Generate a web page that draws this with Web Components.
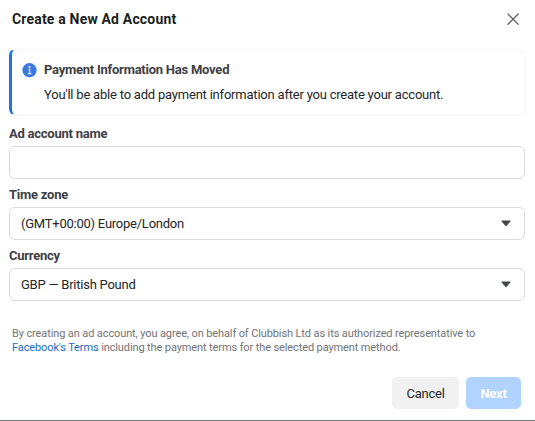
<!DOCTYPE html>
<html lang="en">
<head>
<meta charset="utf-8">
<title>Create a New Ad Account</title>
<style>
html,body{margin:0;background:#fff}
body{font-family:Roboto,"Liberation Sans",sans-serif;color:#1c1e21}
</style>
</head>
<body>
<ad-dialog>
  <span slot="title">Create a New Ad Account</span>
  <info-banner>
    <span slot="heading">Payment Information Has Moved</span>You'll be able to add payment information after you create your account.
  </info-banner>
  <form-field label="Ad account name"></form-field>
  <form-field label="Time zone" select>(GMT+00:00) Europe/London</form-field>
  <form-field label="Currency" select>GBP — British Pound</form-field>
  <terms-note></terms-note>
  <dialog-button slot="actions">Cancel</dialog-button>
  <dialog-button slot="actions" primary>Next</dialog-button>
</ad-dialog>
<script>
const define = (name, html) => customElements.define(name, class extends HTMLElement {
  constructor() {
    super();
    const t = document.createElement('template');
    t.innerHTML = html;
    this.attachShadow({mode: 'open'}).append(t.content.cloneNode(true));
    const label = this.shadowRoot.querySelector('.label');
    if (label) label.textContent = this.getAttribute('label');
  }
});

define('ad-dialog', `
<style>
:host{display:flex;flex-direction:column;box-sizing:border-box;height:421px;border-bottom:1px solid #77787b;background:#fff}
header{display:flex;align-items:center;justify-content:space-between;height:38px;padding:0 15px 0 12px;margin-bottom:11px}
h1{margin:0;font-size:14px;line-height:18px;font-weight:700;letter-spacing:.18px;color:#1c1e21}
svg{display:block}
main{display:flex;flex-direction:column;padding:0 10px 0 9px}
footer{display:flex;justify-content:flex-end;gap:7px;padding:0 14px;margin-top:22px}
</style>
<header><h1><slot name="title"></slot></h1>
<svg width="14" height="14" viewBox="0 0 14 14" fill="none" stroke="#66676a" stroke-width="1.3" stroke-linecap="round"><path d="M2 2l10.2 10.2M12.2 2L2 12.2"/></svg></header>
<main><slot></slot></main>
<footer><slot name="actions"></slot></footer>`);

define('info-banner', `
<style>
:host{display:flex;box-sizing:border-box;height:66px;border:1px solid #f6f6f6;border-left:3px solid #2374e1;border-radius:6px;padding:11px 10px 0 10px;gap:7px;margin-bottom:9px;box-shadow:0 0 2px #eeeeef}
svg{display:block;flex:none;margin-top:2px;margin-left:-.5px;margin-right:.5px}
h2{margin:0 0 7px;font-size:13px;line-height:18px;font-weight:700;letter-spacing:-.24px;color:#3e4043}
p{margin:0;font-size:13px;line-height:18px;letter-spacing:-.21px;color:#242628;white-space:nowrap}
</style>
<svg width="15" height="15" viewBox="0 0 15 15"><circle cx="7.5" cy="7.2" r="7.1" fill="#3b78e2"/><circle cx="7.5" cy="4.1" r="1.15" fill="#e4eeff"/><path d="M6 6.5h1.7v4M5.8 10.6h3.7" fill="none" stroke="#dce8ff" stroke-width="1.2"/></svg>
<div><h2><slot name="heading"></slot></h2><p><slot></slot></p></div>`);

define('form-field', `
<style>
:host{display:block;height:61px}
.label{box-sizing:border-box;padding-top:1px;font-size:13px;line-height:18px;height:22px;font-weight:700;letter-spacing:-.24px;color:#3e4043}
.box{display:flex;align-items:center;justify-content:space-between;box-sizing:border-box;height:33px;border:1px solid #d9dadb;border-radius:6px;padding:0 13px 0 11px;font-size:13px;line-height:18px;letter-spacing:-.24px;color:#242628}
svg{display:none}
:host([select]) svg{display:block}
</style>
<div class="label"></div>
<div class="box"><span><slot></slot></span>
<svg width="10" height="7" viewBox="0 0 10 7"><path d="M1 .5h8q.9.1.3.9L5.7 5.7q-.7.7-1.4 0L.7 1.4Q.1.6 1 .5z" fill="#444648"/></svg></div>`);

define('terms-note', `
<style>
:host{display:block;margin-top:20px;padding-left:3px;font-size:11px;line-height:14px;letter-spacing:-.115px;color:#737476;white-space:nowrap}
a{color:#1b6bc4;text-decoration:none}
</style>By creating an ad account, you agree, on behalf of Clubbish Ltd as its authorized representative to<br><a href="#">Facebook's Terms</a> including the payment terms for the selected payment method.`);

define('dialog-button', `
<style>
:host{display:flex;align-items:center;justify-content:center;box-sizing:border-box;width:67px;height:32px;border-radius:5px;background:#f1f1f1;color:#242628;font-size:13px;letter-spacing:-.24px}
:host([primary]){width:55px;background:#b0d4ff;color:#fff;font-weight:700}
</style><slot></slot>`);
</script>
</body>
</html>
